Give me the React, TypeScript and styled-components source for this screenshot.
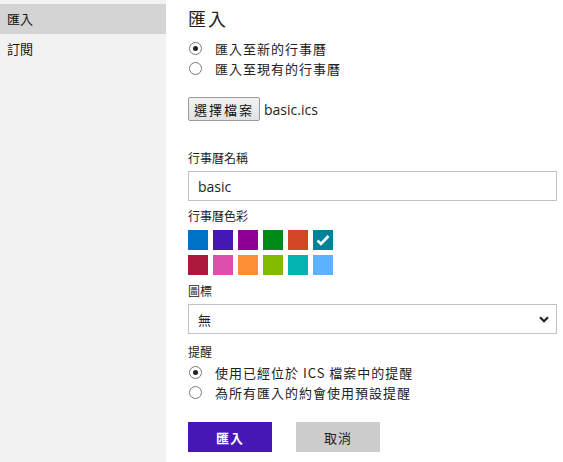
import React from 'react'
import styled, { createGlobalStyle } from 'styled-components'

const GlobalStyle = createGlobalStyle`
	html, body {
		margin: 0;
		padding: 0;
		background: #ffffff;
	}
	body {
		font-family: "Open Sans", "Noto Sans CJK TC", sans-serif;
		font-size: 13px;
		color: #222222;
	}
`

const COLORS = [
	'#0072c6', '#4617b4', '#8c0095', '#008a17', '#d24726', '#008299',
	'#ac193d', '#dc4fad', '#ff8f32', '#82ba00', '#03b3b2', '#5db2ff',
]

const Page = styled.div`
	display: flex;
	width: 563px;
	height: 462px;
	overflow: hidden;
`

const Sidebar = styled.nav`
	width: 166px;
	flex-shrink: 0;
	background: #f2f2f2;
	padding-top: 4px;
	display: flex;
	flex-direction: column;
`

const NavItem = styled.div<{ $active?: boolean }>`
	height: 30px;
	line-height: 30px;
	padding-left: 7px;
	font-family: "Noto Sans CJK TC", sans-serif;
	font-size: 13px;
	color: #111;
	background: ${p => (p.$active ? '#d4d4d4' : 'transparent')};
`

const Main = styled.main`
	flex: 1;
	padding: 0 6px 0 22px;
	display: flex;
	flex-direction: column;
`

const Title = styled.h1`
	margin: 4px 0 0;
	font-family: "Noto Sans CJK TC", sans-serif;
	font-weight: 400;
	font-size: 18px;
	line-height: 28px;
	letter-spacing: 2px;
	color: #222;
`

const RadioGroup = styled.div<{ $top: number }>`
	display: flex;
	flex-direction: column;
	margin-top: ${p => p.$top}px;
`

const RadioRow = styled.label`
	display: flex;
	align-items: center;
	height: 20px;
	gap: 13px;
	font-family: "Noto Sans CJK TC", sans-serif;
	font-size: 13px;
	letter-spacing: 1px;
	color: #222;
`

const RadioDot = styled.span<{ $checked?: boolean }>`
	width: 11px;
	height: 11px;
	border-radius: 50%;
	border: 1px solid #7a7a7a;
	background: #fff;
	display: flex;
	align-items: center;
	justify-content: center;
	margin-left: 1px;
	&::after {
		content: '';
		width: 5px;
		height: 5px;
		border-radius: 50%;
		background: ${p => (p.$checked ? '#222' : 'transparent')};
	}
`

const FileRow = styled.div`
	display: flex;
	align-items: center;
	gap: 4px;
	margin-top: 19px;
`

const FileButton = styled.button`
	box-sizing: border-box;
	height: 24px;
	padding: 0 5px;
	border: 1px solid #9a9a9a;
	border-radius: 2px;
	background: linear-gradient(#f2f2f2, #e2e2e2);
	font-family: "Noto Sans CJK TC", sans-serif;
	font-size: 13px;
	letter-spacing: 2px;
	color: #111;
`

const FileName = styled.span`
	font-family: "Open Sans", sans-serif;
	font-size: 14px;
	color: #222;
`

const Label = styled.div<{ $top: number }>`
	margin-top: ${p => p.$top}px;
	font-family: "Noto Sans CJK TC", sans-serif;
	font-size: 12px;
	line-height: 18px;
	color: #222;
`

const TextField = styled.div`
	margin-top: 4px;
	height: 30px;
	box-sizing: border-box;
	border: 1px solid #c2c2c2;
	padding: 0 9px;
	display: flex;
	align-items: center;
	font-family: "Open Sans", sans-serif;
	font-size: 14px;
	color: #222;
`

const SwatchGrid = styled.div`
	display: grid;
	grid-template-columns: repeat(6, 20px);
	grid-auto-rows: 20px;
	gap: 5px;
	margin-top: 5px;
`

const Swatch = styled.div<{ $color: string }>`
	background: ${p => p.$color};
	display: flex;
	align-items: center;
	justify-content: center;
`

const SelectField = styled(TextField)`
	justify-content: space-between;
	padding-right: 7px;
	font-family: "Noto Sans CJK TC", sans-serif;
	font-size: 13px;
`

const Actions = styled.div`
	display: flex;
	gap: 24px;
	margin-top: 20px;
`

const ActionButton = styled.button<{ $primary?: boolean }>`
	width: 84px;
	height: 30px;
	border: none;
	background: ${p => (p.$primary ? '#4617b4' : '#cccccc')};
	color: ${p => (p.$primary ? '#ffffff' : '#222222')};
	font-family: "Noto Sans CJK TC", sans-serif;
	font-size: 13px;
	font-weight: ${p => (p.$primary ? 700 : 400)};
	letter-spacing: 1px;
`

const Check = () => (
	<svg width="14" height="12" viewBox="0 0 14 12">
		<path d="M1.5 6.5 L5 10 L12.5 2" fill="none" stroke="#fff" strokeWidth="2.6" />
	</svg>
)

const Chevron = () => (
	<svg width="10" height="7" viewBox="0 0 10 7">
		<path d="M1 1.2 L5 5.2 L9 1.2" fill="none" stroke="#222" strokeWidth="2.2" />
	</svg>
)

export default function App() {
	return (
		<Page>
			<GlobalStyle />
			<Sidebar>
				<NavItem $active>匯入</NavItem>
				<NavItem>訂閱</NavItem>
			</Sidebar>
			<Main>
				<Title>匯入</Title>
				<RadioGroup $top={6}>
					<RadioRow><RadioDot $checked />匯入至新的行事曆</RadioRow>
					<RadioRow><RadioDot />匯入至現有的行事曆</RadioRow>
				</RadioGroup>
				<FileRow>
					<FileButton>選擇檔案</FileButton>
					<FileName>basic.ics</FileName>
				</FileRow>
				<Label $top={28}>行事曆名稱</Label>
				<TextField>basic</TextField>
				<Label $top={6}>行事曆色彩</Label>
				<SwatchGrid>
					{COLORS.map((c, i) => (
						<Swatch key={c} $color={c}>{i === 5 && <Check />}</Swatch>
					))}
				</SwatchGrid>
				<Label $top={7}>圖標</Label>
				<SelectField>
					<span>無</span>
					<Chevron />
				</SelectField>
				<Label $top={9}>提醒</Label>
				<RadioGroup $top={1}>
					<RadioRow><RadioDot $checked />使用已經位於 ICS 檔案中的提醒</RadioRow>
					<RadioRow><RadioDot />為所有匯入的約會使用預設提醒</RadioRow>
				</RadioGroup>
				<Actions>
					<ActionButton $primary>匯入</ActionButton>
					<ActionButton>取消</ActionButton>
				</Actions>
			</Main>
		</Page>
	)
}
